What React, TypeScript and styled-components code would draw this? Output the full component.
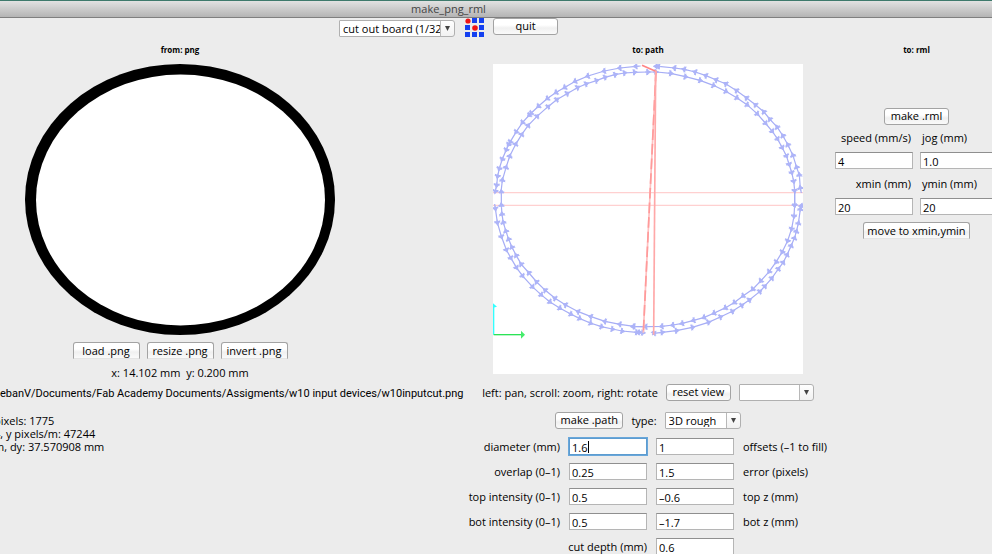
import React from "react";
import styled, { createGlobalStyle, css } from "styled-components";

const GlobalStyle = createGlobalStyle`
  * { box-sizing: border-box; }
  body {
    margin: 0;
    background: #ececec;
    color: #000;
    font: 500 11px/13px "Open Sans", "Noto Sans", sans-serif;
    overflow: hidden;
  }
`;

const Page = styled.div`
  height: 100vh;
  overflow: hidden;
  background: #ececec;
`;

const TitleBar = styled.header`
  height: 18px;
  padding-right: 95px;
  border-top: 1px solid #3f7a6c;
  border-bottom: 1px solid #7f7f7f;
  background: linear-gradient(#e2e2e2, #b4b4b4);
  color: #444;
  text-align: center;
  line-height: 16px;
`;

const Title = styled.h1`
  margin: 0;
  font: inherit;
`;

const Toolbar = styled.div`
  display: flex;
  justify-content: center;
  align-items: flex-start;
  gap: 9px;
  height: 22px;
  padding-right: 95px;
`;

const Columns = styled.main`
  display: grid;
  grid-template-columns: minmax(0, 1fr) 356px 163px;
  column-gap: 9px;
  margin-right: -6px;
`;

const Column = styled.section<{ $trailing?: number }>`
  display: flex;
  flex-direction: column;
  align-items: center;
  padding-right: ${(p) => p.$trailing ?? 0}px;
  white-space: nowrap;
`;

const Heading = styled.h2`
  margin: 0 0 4px;
  font-size: 8px;
  font-weight: 700;
  line-height: 20px;
`;

const Button = styled.button<{ $width: number; $open?: boolean }>`
  flex: none;
  min-width: ${(p) => p.$width}px;
  height: 17px;
  padding: 0 0 2px;
  border: 1px solid #a3a3a3;
  border-radius: 3px;
  background: linear-gradient(#fff 40%, #f0f0f0 60%, #fafafa);
  color: #000;
  font: inherit;
  line-height: 13px;
  white-space: nowrap;
  ${(p) =>
    p.$open &&
    css`
      padding: 0;
      border-bottom-color: #e4e4e4;
      border-radius: 3px 3px 0 0;
    `}
`;

const SelectFrame = styled.span<{ $width: number; $drop?: boolean }>`
  position: relative;
  flex: none;
  width: ${(p) => p.$width}px;
  height: 17px;
  margin-top: ${(p) => (p.$drop ? 2 : 0)}px;
`;

const Select = styled.select`
  display: block;
  width: 100%;
  height: 100%;
  padding: 0 14px 0 3px;
  border: 1px solid #b0b0b0;
  border-radius: 1px 3px 3px 1px;
  appearance: none;
  background: linear-gradient(#b8b8b8, #b8b8b8) right 13px top / 1px 100% no-repeat,
    linear-gradient(#fff, #f1f1f1) right / 14px 100% no-repeat, #fff;
  color: #000;
  font: inherit;
  text-overflow: clip;
`;

const SelectArrow = styled.svg`
  position: absolute;
  right: 5px;
  top: 6px;
  width: 5px;
  height: 5px;
  pointer-events: none;
`;

const Logo = styled.svg`
  width: 20px;
  height: 20px;
`;

const Row = styled.div<{ $gap?: number; $top?: number; $height?: number }>`
  display: flex;
  align-items: center;
  gap: ${(p) => p.$gap ?? 8}px;
  height: ${(p) => p.$height ?? 20}px;
  margin-top: ${(p) => p.$top ?? 8}px;
`;

const Drawing = styled.svg<{ $paper?: boolean }>`
  display: block;
  width: 310px;
  background: ${(p) => (p.$paper ? "#fff" : "transparent")};
`;

const Text = styled.p`
  margin: 7px 0 8px;
`;

const FilePath = styled.p`
  align-self: flex-start;
  margin: 0 0 14px;
  font-family: Roboto, "Open Sans", sans-serif;
  font-weight: 400;
`;

const Stats = styled.div`
  align-self: flex-start;
  margin-left: -6px;
  white-space: pre;
`;

const PathForm = styled.form`
  display: grid;
  grid-template-columns: 90px 78px 78px 1fr;
  grid-auto-rows: 17px;
  align-items: center;
  align-self: stretch;
  gap: 8px 9px;
  margin-top: 8px;
`;

const Label = styled.label<{ $end?: boolean; $wide?: boolean }>`
  justify-self: ${(p) => (p.$end ? "end" : "start")};
  ${(p) =>
    p.$wide &&
    css`
      grid-column: 1 / 3;
    `}
`;

const Input = styled.input<{ $active?: boolean }>`
  width: 100%;
  height: 17px;
  padding: 1px 2px 0;
  border: 1px solid #b5b5b5;
  border-top-color: #8f8f8f;
  outline: none;
  background: #fff;
  color: #000;
  font: inherit;
  ${(p) =>
    p.$active &&
    css`
      border-color: #5d9cd0;
      box-shadow: 0 0 0 1px #69a7da;
      background: linear-gradient(#000, #000) 18px 2px / 1px 12px no-repeat, #fff;
    `}
`;

const MachineForm = styled.form`
  display: grid;
  grid-template-columns: 78px 78px;
  column-gap: 7px;
  row-gap: 8px;
  margin: 6px 0 7px;
`;

const MachineLabel = styled.label<{ $end?: boolean }>`
  height: 13px;
  padding: 0 2px;
  text-align: ${(p) => (p.$end ? "right" : "left")};
`;

function DropDown({ id, label, width, options, drop }: { id: string; label: string; width: number; options: string[]; drop?: boolean }) {
  return (
    <SelectFrame $width={width} $drop={drop}>
      <Select id={id} aria-label={label}>
        {options.map((o) => (
          <option key={o}>{o}</option>
        ))}
      </Select>
      <SelectArrow viewBox="0 0 5 5" aria-hidden="true">
        <path d="M0 0H5L2.5 5Z" fill="#444" />
      </SelectArrow>
    </SelectFrame>
  );
}

type Point = [number, number];
type Trace = { origin: Point; reverse?: boolean; points: Point[] };

const traces: Trace[] = [
  { origin: [-39, -27], reverse: true, points: [[46,408],[50,390],[53,363],[58,340],[67,312],[79,284],[86,268],[91,260],[109,230],[128,202],[148,180],[154,174],[176,153],[203,130],[229,112],[255,97],[286,79],[324,63],[373,48],[420,39],[468,34],[482,33]] },
  { origin: [-39, -27], points: [[63,411],[67,376],[78,338],[89,304],[107,268],[125,239],[144,212],[171,184],[204,155],[230,134],[261,116],[292,98],[318,87],[349,77],[375,67],[405,59],[433,54],[463,52],[503,51],[527,51]] },
  { origin: [441, -27], points: [[49,51],[92,55],[136,65],[180,76],[220,91],[257,109],[290,128],[321,149],[351,176],[376,204],[396,228],[412,251],[426,277],[439,302],[447,327],[455,352],[461,378],[464,406],[464,450]] },
  { origin: [441, -27], reverse: true, points: [[49,34],[56,34],[104,39],[133,43],[166,51],[198,62],[229,75],[258,87],[290,107],[320,129],[347,150],[372,171],[390,193],[412,217],[429,243],[444,270],[459,302],[470,337],[478,360],[481,399],[484,414]] },
  { origin: [-39, 408], points: [[44,12],[46,25],[52,67],[64,109],[79,149],[92,173],[109,202],[127,227],[157,260],[183,284],[209,305],[239,324],[272,342],[298,355],[331,369],[364,380],[397,387],[426,393],[470,397],[478,397],[488,398]] },
  { origin: [-39, 408], reverse: true, points: [[64,-24],[64,16],[66,43],[70,68],[78,94],[86,118],[96,142],[109,167],[124,193],[147,219],[170,246],[196,271],[225,295],[257,315],[295,335],[333,350],[375,364],[420,373],[462,379],[498,380]] },
  { origin: [441, 378], reverse: true, points: [[484,48],[481,58],[475,100],[469,125],[463,145],[453,168],[441,195],[429,218],[415,237],[395,265],[374,289],[359,305],[328,330],[305,346],[277,364],[241,381],[205,397],[157,412],[109,422],[66,427],[42,430],[38,434]] },
  { origin: [441, 378], points: [[464,4],[464,45],[462,78],[455,116],[443,152],[427,185],[409,215],[388,244],[363,272],[339,297],[310,317],[284,337],[257,353],[223,369],[193,382],[161,391],[127,400],[99,405],[66,409],[18,410],[-20,410]] },
];

function TraceLine({ trace }: { trace: Trace }) {
  const pts = trace.reverse ? [...trace.points].reverse() : trace.points;
  const [ox, oy] = trace.origin;
  return (
    <g transform={`translate(${ox} ${oy})`}>
      <polyline points={pts.join(" ")} fill="none" stroke="#a6adf5" strokeWidth="3.6" />
      {pts.slice(1).map(([x, y], i) => {
        const [px, py] = pts[i];
        const angle = (Math.atan2(y - py, x - px) * 180) / Math.PI;
        return (
          <path
            key={i}
            transform={`translate(${x} ${y}) rotate(${angle})`}
            d="M8 0L-3 -7L-2 0L-3 7Z M0 -9V9 M-8 0H9"
            fill="#adb4f8"
            stroke="#adb4f8"
            strokeWidth="3"
          />
        );
      })}
    </g>
  );
}

function ToolPath() {
  return (
    <Drawing $paper viewBox="0 0 930 930" role="img" aria-label="Tool path">
      <g fill="none">
        <path d="M0 386H930M0 424H930" stroke="#ffd0d0" strokeWidth="4" />
        {traces.map((t, i) => (
          <TraceLine key={i} trace={t} />
        ))}
        <path d="M447 4L488 22" stroke="#ff8585" strokeWidth="5" />
        <path d="M489 20L451 806" stroke="#ffc0c0" strokeWidth="5" />
        <path d="M489 20L451 806" stroke="#ff9a9a" strokeWidth="5" strokeDasharray="32 12" />
        <path d="M488 20L482 812" stroke="#ffa8a8" strokeWidth="5" />
        <path d="M2 812V728" stroke="#3ff" strokeWidth="4" />
        <path d="M2 812H84" stroke="#2be356" strokeWidth="4" />
      </g>
      <path d="M0 718L12 728L0 731Z" fill="#3ff" />
      <path d="M84 800L96 812L84 824Z" fill="#45ed6c" />
    </Drawing>
  );
}

function BoardOutline() {
  return (
    <Drawing viewBox="0 0 310 271" role="img" aria-label="Board outline">
      <ellipse cx="155" cy="135.5" rx="155" ry="135.5" fill="#000" />
      <ellipse cx="155.5" cy="136" rx="144.5" ry="125.5" fill="#fff" />
    </Drawing>
  );
}

const pathFields = [
  { left: "diameter (mm)", a: "1.6", b: "1", right: "offsets (–1 to fill)", active: true },
  { left: "overlap (0–1)", a: "0.25", b: "1.5", right: "error (pixels)" },
  { left: "top intensity (0–1)", a: "0.5", b: "–0.6", right: "top z (mm)" },
  { left: "bot intensity (0–1)", a: "0.5", b: "–1.7", right: "bot z (mm)" },
];

export default function App() {
  return (
    <Page>
      <GlobalStyle />
      <TitleBar>
        <Title>make_png_rml</Title>
      </TitleBar>
      <Toolbar>
        <DropDown id="process" label="Process" width={116} options={["cut out board (1/32)"]} drop />
        <Logo viewBox="0 0 20 20" role="img" aria-label="Logo">
          <path
            d="M8 0h5v5h-5zM15 0h5v5h-5zM1 7h5v5h-5zM15 7h5v5h-5zM1 14h5v5h-5zM8 14h5v5h-5zM15 14h5v5h-5z"
            fill="#1440f0"
          />
          <circle cx="4" cy="3" r="2.6" fill="#f01414" />
          <circle cx="11" cy="10" r="2.8" fill="#f01414" />
        </Logo>
        <Button type="button" $width={65}>quit</Button>
      </Toolbar>
      <Columns>
        <Column $trailing={101}>
          <Heading>from: png</Heading>
          <BoardOutline />
          <Row $gap={7} $top={7} $height={17}>
            <Button type="button" $width={67} $open>load .png</Button>
            <Button type="button" $width={67} $open>resize .png</Button>
            <Button type="button" $width={67} $open>invert .png</Button>
          </Row>
          <Text>x: 14.102 mm&nbsp; y: 0.200 mm</Text>
          <FilePath>ebanV/Documents/Fab Academy Documents/Assigments/w10 input devices/w10inputcut.png</FilePath>
          <Stats>{"pixels: 1775\n4, y pixels/m: 47244\nm, dy: 37.570908 mm"}</Stats>
        </Column>
        <Column>
          <Heading>to: path</Heading>
          <ToolPath />
          <Row>
            <span>left: pan, scroll: zoom, right: rotate</span>
            <Button type="button" $width={65}>reset view</Button>
            <DropDown id="view" label="View" width={75} options={[""]} />
          </Row>
          <Row>
            <Button type="button" $width={68}>make .path</Button>
            <label htmlFor="type">type:</label>
            <DropDown id="type" label="type" width={76} options={["3D rough"]} />
          </Row>
          <PathForm>
            {pathFields.map((f, i) => (
              <React.Fragment key={f.left}>
                <Label $end htmlFor={`a${i}`}>{f.left}</Label>
                <Input id={`a${i}`} defaultValue={f.a} $active={f.active} />
                <Input id={`b${i}`} defaultValue={f.b} />
                <Label htmlFor={`b${i}`}>{f.right}</Label>
              </React.Fragment>
            ))}
            <Label $end $wide htmlFor="depth">cut depth (mm)</Label>
            <Input id="depth" defaultValue="0.6" />
          </PathForm>
        </Column>
        <Column>
          <Heading>to: rml</Heading>
          <Row $top={44} $height={17}>
            <Button type="button" $width={65}>make .rml</Button>
          </Row>
          <MachineForm>
            <MachineLabel $end htmlFor="speed">speed (mm/s)</MachineLabel>
            <MachineLabel htmlFor="jog">jog (mm)</MachineLabel>
            <Input id="speed" defaultValue="4" />
            <Input id="jog" defaultValue="1.0" />
            <MachineLabel $end htmlFor="xmin">xmin (mm)</MachineLabel>
            <MachineLabel htmlFor="ymin">ymin (mm)</MachineLabel>
            <Input id="xmin" defaultValue="20" />
            <Input id="ymin" defaultValue="20" />
          </MachineForm>
          <Button type="button" $width={107} $open>move to xmin,ymin</Button>
        </Column>
      </Columns>
    </Page>
  );
}
